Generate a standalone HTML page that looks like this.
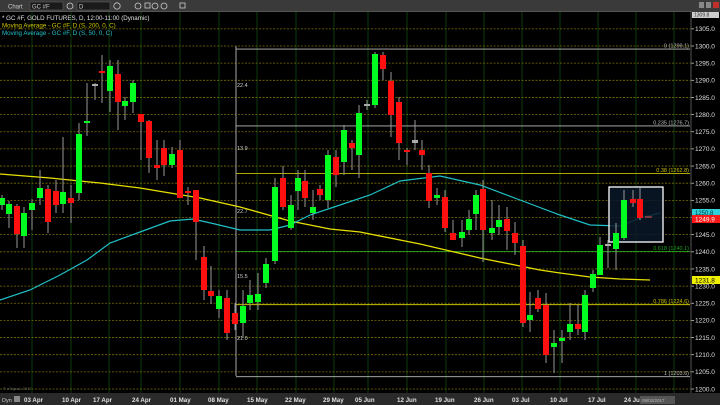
<!DOCTYPE html>
<html><head><meta charset="utf-8"><style>
html,body{margin:0;padding:0;background:#000;width:720px;height:405px;overflow:hidden;font-family:"Liberation Sans",sans-serif}
svg{display:block}
</style></head><body>
<svg id="s" width="720" height="405" xmlns="http://www.w3.org/2000/svg" font-family="Liberation Sans, sans-serif">
<rect width="720" height="405" fill="#000"/>
<g id="grid"></g>
<g id="fib"></g>
<polyline fill="none" stroke="#e8e000" stroke-width="1.3" points="0,174 50,178 100,183 140,188 170,193 200,198 240,207 290,221 330,229 360,232 400,240 420,244 450,251 480,258 520,266 540,270 560,273 590,277 620,279 650,280"/>
<polyline fill="none" stroke="#20c0c8" stroke-width="1.2" points="0,300 30,290 60,275 87,260 110,243 140,232 170,221 193,219 215,224 240,230 270,230 290,225 310,215 340,205 370,195 400,181 440,176 480,185 520,200 560,215 590,225 620,226 640,218 660,213"/>
<rect x="609" y="187" width="54" height="55" fill="#0a1828" fill-opacity="0.85" stroke="#fff" stroke-width="1.3"/>
<g id="c"></g>
<g id="axis"></g>
<rect x="0" y="0" width="720" height="12" fill="#3a3a3a"/>
<rect x="0" y="11" width="720" height="1" fill="#555"/>
<text x="8" y="8.5" fill="#ccc" font-size="6">Chart</text>
<rect x="30" y="2" width="33" height="8" fill="#1a1a1a" stroke="#666" stroke-width=".5"/><text x="32" y="8.5" fill="#ccc" font-size="6">GC #F</text>
<rect x="77" y="2" width="33" height="8" fill="#1a1a1a" stroke="#666" stroke-width=".5"/><text x="79" y="8.5" fill="#ccc" font-size="6">D</text>
<g fill="none" stroke="#ccc" stroke-width=".8"><circle cx="70" cy="6" r="3"/><circle cx="117" cy="6" r="3.2"/><circle cx="138" cy="6" r="3"/><circle cx="155" cy="6" r="3"/><circle cx="164" cy="6" r="3"/><rect x="145" y="3" width="5" height="5"/><rect x="180" y="3" width="5" height="5"/></g>
<text x="2" y="20" fill="#e0e0e0" font-size="6.2">* GC #F, GOLD FUTURES, D, 12:00-11:00 (Dynamic)</text>
<text x="2" y="27.5" fill="#d0c800" font-size="6.2">Moving Average - GC #F, D (S, 200, 0, C)</text>
<text x="2" y="35" fill="#20c0c8" font-size="6.2">Moving Average - GC #F, D (S, 50, 0, C)</text>
<rect x="0" y="393" width="720" height="12" fill="#2a2a2a"/>
<text x="2" y="402" fill="#ccc" font-size="5.5">Dyn</text><rect x="14" y="396" width="6" height="6" fill="#888"/>
<text x="3" y="390" fill="#666" font-size="4">© eSignal, 2017</text>
<g id="dates" fill="#e0e0e0" font-size="6.2" font-weight="bold"></g>
<rect x="640" y="396" width="35" height="8" fill="#555"/><text x="642" y="402" fill="#bbb" font-size="4.5">08/02/2017</text>
<rect x="692" y="0" width="28" height="12" fill="#3a3a3a"/>
<rect x="699" y="2" width="5" height="6" fill="#888"/><rect x="706" y="2" width="5" height="6" fill="#888"/><rect x="713" y="2" width="6" height="6" fill="#c0302a"/>
</svg>
<script>
var NS="http://www.w3.org/2000/svg";
function el(p,t,a,txt){var e=document.createElementNS(NS,t);for(var k in a)e.setAttribute(k,a[k]);if(txt!==undefined)e.textContent=txt;document.getElementById(p).appendChild(e);return e;}
function Y(p){return 46+(1300-p)*3.43;}
// grid
var vx=[32,71,109,141,180,219,257,296,334,368,407,446,484,522,560,598,636,674];
vx.forEach(function(x){el("grid","line",{x1:x,y1:12,x2:x,y2:393,stroke:"#0c3a0c","stroke-width":1});});
for(var p=1305;p>=1200;p-=5){var y=Y(p);
 el("grid","line",{x1:0,y1:y,x2:691,y2:y,stroke:"#7a7000","stroke-width":.8,"stroke-dasharray":"2,1.5"});
 el("axis","line",{x1:691,y1:y,x2:694,y2:y,stroke:"#ccc","stroke-width":.8});
 el("axis","text",{x:695,y:y+2.3,fill:"#e0e0e0","font-size":"6.5"},p.toFixed(1));}
el("axis","line",{x1:691,y1:12,x2:691,y2:393,stroke:"#555","stroke-width":1});
el("axis","rect",{x:692,y:11,width:27,height:7,fill:"#ccc"});
el("axis","text",{x:694,y:16.5,fill:"#333","font-size":"5"},"1309.8");
// fib
var fib=[[1299.1,"0 (1299.1)","#bbb"],[1276.7,"0.235 (1276.7)","#bbb"],[1262.8,"0.38 (1262.8)","#c8c000"],[1240.1,"0.618 (1240.1)","#20a020"],[1224.6,"0.786 (1224.6)","#c8c000"],[1203.6,"1 (1203.6)","#bbb"]];
fib.forEach(function(f){var y=Y(f[0]);el("fib","line",{x1:236,y1:y,x2:690,y2:y,stroke:f[2],"stroke-width":.9});
 el("fib","text",{x:689,y:y-1.5,fill:f[2],"font-size":"5.5","text-anchor":"end"},f[1]);});
el("fib","line",{x1:236,y1:46,x2:236,y2:376,stroke:"#bbb","stroke-width":.9});
[[87,"22.4"],[150,"13.9"],[213,"22.7"],[278,"15.5"],[340,"21.0"]].forEach(function(l){el("fib","text",{x:237,y:l[0],fill:"#ccc","font-size":"5.5"},l[1]);});
// candles [x, bodyTop, bodyBot, wickTop, wickBot, color]
var G="#00ff20",R="#ff1010";
var c=[[2,198,205,195,210,G],[9,204,214,201,228,G],[17,206,234,204,248,R],[24,213,236,207,248,G],[32,203,210,199,230,G],[40,188,198,170,205,G],[48,189,222,185,233,R],[56,191,205,180,213,R],[63,192,204,137,213,G],[71,198,203,185,223,R],[79,134,193,123,200,G],[87,121,123,83,136,G],[95,84,86,83,100,"#aaa"],[102,71,73,55,103,R],[110,66,91,60,112,G],[118,74,102,60,130,R],[125,101,106,97,120,G],[133,83,102,80,113,G],[141,114,122,114,160,R],[149,121,158,120,173,R],[157,165,168,140,180,R],[164,148,165,140,176,R],[172,154,165,147,168,G],[180,150,198,140,198,R],[188,191,193,187,205,R],[196,190,222,190,260,R],[204,257,290,246,300,R],[211,291,296,266,304,R],[219,296,309,290,318,G],[227,298,333,290,340,R],[235,313,324,303,330,R],[243,306,323,290,338,G],[250,295,303,280,310,G],[258,294,302,273,310,G],[266,264,283,258,288,G],[275,187,261,178,264,G],[283,178,207,166,210,R],[291,205,228,195,230,G],[298,178,191,170,210,G],[305,181,198,170,207,R],[313,207,213,190,220,G],[320,189,195,185,200,R],[328,155,200,150,208,G],[336,157,175,150,187,R],[344,130,162,125,175,G],[352,143,148,140,170,R],[359,113,155,105,178,G],[367,104,106,100,110,"#aaa"],[375,54,105,52,108,G],[383,55,69,52,80,R],[391,81,115,72,137,R],[399,102,143,97,160,R],[407,150,152,148,165,R],[415,140,143,120,150,"#aaa"],[422,150,155,140,170,R],[429,173,201,165,208,R],[437,195,198,188,205,G],[445,197,228,190,232,R],[453,233,240,220,240,R],[462,232,238,220,247,G],[469,219,230,210,235,G],[476,195,214,190,230,G],[483,189,230,180,262,R],[492,228,233,200,240,G],[499,220,227,205,235,G],[507,219,231,207,250,R],[515,233,243,222,255,R],[523,246,323,240,327,R],[530,315,320,292,332,G],[538,298,309,290,312,R],[546,305,355,293,363,R],[554,343,347,330,373,G],[562,338,341,330,363,G],[570,324,332,303,340,G],[578,324,329,305,335,R],[585,295,332,290,340,G],[593,274,288,270,292,G],[600,245,275,237,275,G],[608,244,246,240,268,"#aaa"],[616,233,249,223,270,G],[624,200,238,190,240,G],[633,199,203,190,207,R],[640,199,218,188,220,R]];
c.forEach(function(k){el("c","line",{x1:k[0],y1:k[3],x2:k[0],y2:k[4],stroke:"#999","stroke-width":1});
 el("c","rect",{x:k[0]-3,y:k[1],width:6,height:Math.max(1.5,k[2]-k[1]),fill:k[5]});});
el("c","line",{x1:645,y1:217,x2:652,y2:217,stroke:"#e05050","stroke-width":1});
// price markers
el("axis","rect",{x:692,y:209,width:28,height:7,fill:"#30d0d8"});el("axis","text",{x:695,y:215,fill:"#033","font-size":"6"},"1250.8");
el("axis","rect",{x:692,y:215,width:28,height:8,fill:"#ff1818"});el("axis","text",{x:695,y:221.5,fill:"#fff","font-size":"6.5"},"1249.9");
el("axis","rect",{x:692,y:276,width:28,height:8,fill:"#f0f000"});el("axis","text",{x:695,y:282.5,fill:"#000","font-size":"6.5"},"1231.8");
// dates
[[24,"03 Apr"],[62,"10 Apr"],[93,"17 Apr"],[132,"24 Apr"],[170,"01 May"],[208,"08 May"],[247,"15 May"],[285,"22 May"],[323,"29 May"],[355,"05 Jun"],[397,"12 Jun"],[435,"19 Jun"],[474,"26 Jun"],[512,"03 Jul"],[550,"10 Jul"],[588,"17 Jul"],[624,"24 Jul"]].forEach(function(d){el("dates","text",{x:d[0],y:402},d[1]);});
</script>
</body></html>
